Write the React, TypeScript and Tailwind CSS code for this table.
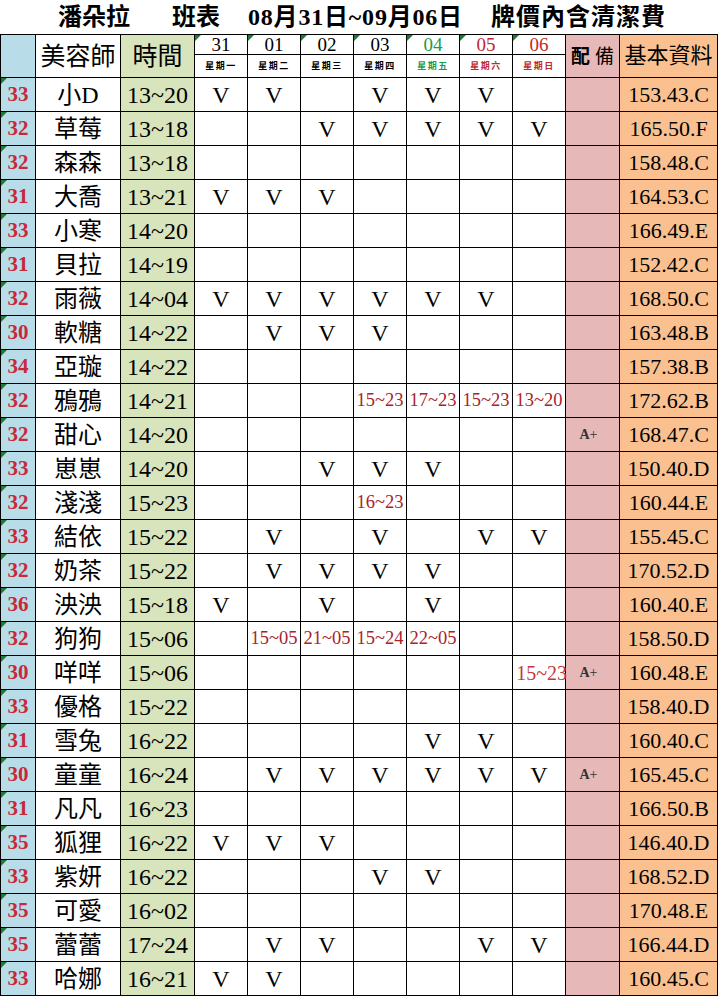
import React from 'react';

const SERIF = { fontFamily: "'Liberation Serif', 'Noto Sans CJK TC', serif" };

type Day = { d: string; w: string; c: string };
const days: Day[] = [
  { d: '31', w: '星期一', c: 'text-black' },
  { d: '01', w: '星期二', c: 'text-black' },
  { d: '02', w: '星期三', c: 'text-black' },
  { d: '03', w: '星期四', c: 'text-black' },
  { d: '04', w: '星期五', c: 'text-[#1a9c4a]' },
  { d: '05', w: '星期六', c: 'text-[#c0282d]' },
  { d: '06', w: '星期日', c: 'text-[#c0282d]' },
];

type Row = { n: string; name: string; t: string; s: string[]; eq?: string; info: string; big?: boolean };
const V = 'V';
const _ = '';
const rows: Row[] = [
  { n: '33', name: '小D', t: '13~20', s: [V, V, _, V, V, V, _], info: '153.43.C' },
  { n: '32', name: '草莓', t: '13~18', s: [_, _, V, V, V, V, V], info: '165.50.F' },
  { n: '32', name: '森森', t: '13~18', s: [_, _, _, _, _, _, _], info: '158.48.C' },
  { n: '31', name: '大喬', t: '13~21', s: [V, V, V, _, _, _, _], info: '164.53.C' },
  { n: '33', name: '小寒', t: '14~20', s: [_, _, _, _, _, _, _], info: '166.49.E' },
  { n: '31', name: '貝拉', t: '14~19', s: [_, _, _, _, _, _, _], info: '152.42.C' },
  { n: '32', name: '雨薇', t: '14~04', s: [V, V, V, V, V, V, _], info: '168.50.C' },
  { n: '30', name: '軟糖', t: '14~22', s: [_, V, V, V, _, _, _], info: '163.48.B' },
  { n: '34', name: '亞璇', t: '14~22', s: [_, _, _, _, _, _, _], info: '157.38.B' },
  { n: '32', name: '鴉鴉', t: '14~21', s: [_, _, _, '15~23', '17~23', '15~23', '13~20'], info: '172.62.B' },
  { n: '32', name: '甜心', t: '14~20', s: [_, _, _, _, _, _, _], eq: 'A+', info: '168.47.C' },
  { n: '33', name: '崽崽', t: '14~20', s: [_, _, V, V, V, _, _], info: '150.40.D' },
  { n: '32', name: '淺淺', t: '15~23', s: [_, _, _, '16~23', _, _, _], info: '160.44.E' },
  { n: '33', name: '結依', t: '15~22', s: [_, V, _, V, _, V, V], info: '155.45.C' },
  { n: '32', name: '奶茶', t: '15~22', s: [_, V, V, V, V, _, _], info: '170.52.D' },
  { n: '36', name: '泱泱', t: '15~18', s: [V, _, V, _, V, _, _], info: '160.40.E' },
  { n: '32', name: '狗狗', t: '15~06', s: [_, '15~05', '21~05', '15~24', '22~05', _, _], info: '158.50.D' },
  { n: '30', name: '咩咩', t: '15~06', s: [_, _, _, _, _, _, '15~23'], eq: 'A+', info: '160.48.E', big: true },
  { n: '33', name: '優格', t: '15~22', s: [_, _, _, _, _, _, _], info: '158.40.D' },
  { n: '31', name: '雪兔', t: '16~22', s: [_, _, _, _, V, V, _], info: '160.40.C' },
  { n: '30', name: '童童', t: '16~24', s: [_, V, V, V, V, V, V], eq: 'A+', info: '165.45.C' },
  { n: '31', name: '凡凡', t: '16~23', s: [_, _, _, _, _, _, _], info: '166.50.B' },
  { n: '35', name: '狐狸', t: '16~22', s: [V, V, V, _, _, _, _], info: '146.40.D' },
  { n: '33', name: '紫妍', t: '16~22', s: [_, _, _, V, V, _, _], info: '168.52.D' },
  { n: '35', name: '可愛', t: '16~02', s: [_, _, _, _, _, _, _], info: '170.48.E' },
  { n: '35', name: '蕾蕾', t: '17~24', s: [_, V, V, _, _, V, V], info: '166.44.D' },
  { n: '33', name: '哈娜', t: '16~21', s: [V, V, _, _, _, _, _], info: '160.45.C' },
];

function Tri() {
  return (
    <div className="absolute left-0 top-0 h-0 w-0 border-t-[6px] border-r-[6px] border-t-[#1e7b34] border-r-transparent" />
  );
}

function SchedCell({ v, big }: { v: string; big?: boolean }) {
  if (v === 'V') {
    return <div className="flex items-center justify-center bg-white text-[24px] leading-none text-black">V</div>;
  }
  if (v && big) {
    return (
      <div className="relative z-10 flex items-center justify-end bg-white text-[20px] leading-none text-[#c4383a]">
        <span className="-mr-[2px]">{v}</span>
      </div>
    );
  }
  if (v) {
    return (
      <div className="flex items-center justify-center bg-white text-[18.5px] leading-none text-[#a8232b]">{v}</div>
    );
  }
  return <div className="bg-white" />;
}

export default function App() {
  return (
    <div className="w-[719px] bg-white text-black" style={SERIF}>
      <div className="flex h-[34px] items-center text-[24px] font-bold leading-none">
        <span className="ml-[58px]">潘朵拉</span>
        <span className="ml-[42px]">班表</span>
        <span className="ml-[28px] tracking-[0.8px]">08月31日~09月06日</span>
        <span className="ml-[28px] tracking-[1px]">牌價內含清潔費</span>
      </div>
      <div className="grid w-[718px] grid-cols-[34px_84px_73px_repeat(7,52px)_53px_97px] grid-rows-[19px_22px_repeat(27,33px)] gap-px bg-black p-px">
        <div className="row-span-2 bg-[#b8dce8]" />
        <div className="row-span-2 flex items-center justify-center bg-white text-[25px] leading-none">美容師</div>
        <div className="row-span-2 flex items-center justify-center bg-[#d8e4bc] text-[25px] leading-none">時間</div>
        {days.map((d) => (
          <div key={d.d} className={`relative flex items-center justify-center bg-white text-[19px] leading-none ${d.c}`}>
            <Tri />
            {d.d}
          </div>
        ))}
        <div className="row-span-2 flex items-center justify-center bg-[#e6b9b8] text-[19px] leading-none">
          <span className="font-bold">配</span>
          <span className="ml-[5px]">備</span>
        </div>
        <div className="row-span-2 flex items-center justify-center bg-[#fac090] text-[22px] leading-none">基本資料</div>
        {days.map((d) => (
          <div
            key={d.w}
            className={`flex items-center justify-center bg-white text-[9px] font-bold leading-none tracking-[1.5px] ${d.c}`}
          >
            {d.w}
          </div>
        ))}
        {rows.map((r, i) => (
          <React.Fragment key={i}>
            <div className="relative flex items-center justify-center bg-[#b8dce8] text-[21px] font-bold leading-none text-[#c8283a]">
              <Tri />
              {r.n}
            </div>
            <div className="flex items-center justify-center bg-white text-[24px] leading-none">{r.name}</div>
            <div className="flex items-center justify-center bg-[#d8e4bc] text-[24px] leading-none">{r.t}</div>
            {r.s.map((v, j) => (
              <SchedCell key={j} v={v} big={r.big} />
            ))}
            <div className="flex items-center justify-center bg-[#e6b9b8] pr-[8px] text-[14px] leading-none text-[#333]">
              {r.eq ? (
                <>
                  <span className="font-bold">A</span>
                  <span>+</span>
                </>
              ) : null}
            </div>
            <div className="flex items-center justify-center bg-[#fac090] text-[22px] leading-none">{r.info}</div>
          </React.Fragment>
        ))}
      </div>
    </div>
  );
}
